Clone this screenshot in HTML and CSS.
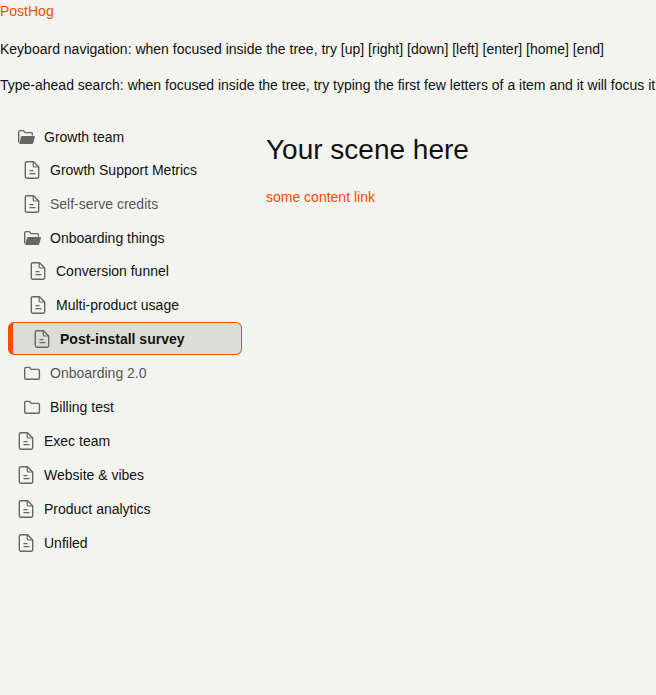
FILE: index.html
```html
<!DOCTYPE html>
<html lang="en">
<head>
    <meta charset="UTF-8">
    <meta name="viewport" content="width=device-width, initial-scale=1.0">
    <title>PostHog tree</title>
    <link rel="stylesheet" href="styles.css">
</head>
<body>
    <svg class="icon-defs" width="0" height="0">
        <symbol id="icon-file" viewBox="0 0 18 18">
            <path d="M2.3 2.2C2.3 1.4 2.9 0.8 3.7 0.8H10.6L15.7 5.9V15.8C15.7 16.6 15.1 17.2 14.3 17.2H3.7C2.9 17.2 2.3 16.6 2.3 15.8Z" fill="none" stroke="currentColor" stroke-width="1.4" stroke-linejoin="round"/>
            <path d="M10.2 1V4.8C10.2 5.5 10.7 6 11.4 6H15.5M6.5 9.6H10.5M6.5 12.6H12.5" fill="none" stroke="currentColor" stroke-width="1.2"/>
        </symbol>
        <symbol id="icon-folder" viewBox="0 0 18 18">
            <path d="M1.7 4.6C1.7 3.9 2.2 3.4 2.9 3.4H6.4L8.2 5.4H15.2C15.9 5.4 16.4 5.9 16.4 6.6V14C16.4 14.7 15.9 15.2 15.2 15.2H2.9C2.2 15.2 1.7 14.7 1.7 14Z" fill="none" stroke="currentColor" stroke-width="1.4" stroke-linejoin="round"/>
        </symbol>
        <symbol id="icon-folder-open" viewBox="0 0 18 18">
            <path d="M1.7 14.6V3.8C1.7 3.1 2.2 2.6 2.9 2.6H6.4L8.2 4.6H14.2C14.9 4.6 15.4 5.1 15.4 5.8V7.4" fill="none" stroke="currentColor" stroke-width="1.4" stroke-linejoin="round"/>
            <path d="M2.2 16L4 8.8C4.1 8.3 4.5 8 5 8H17C17.6 8 18 8.6 17.9 9.2L16.2 15C16 15.6 15.5 16 14.9 16Z" fill="currentColor"/>
        </symbol>
    </svg>

    <a class="link" href="#">PostHog</a>
    <p class="hint">Keyboard navigation: when focused inside the tree, try [up] [right] [down] [left] [enter] [home] [end]</p>
    <p class="hint">Type-ahead search: when focused inside the tree, try typing the first few letters of a item and it will focus it</p>

    <div class="layout">
        <ul class="tree">
            <li>
                <div class="row"><svg class="icon"><use href="#icon-folder-open"/></svg>Growth team</div>
                <ul class="group">
                    <li class="row level-1"><svg class="icon"><use href="#icon-file"/></svg>Growth Support Metrics</li>
                    <li class="row level-1 dim"><svg class="icon"><use href="#icon-file"/></svg>Self-serve credits</li>
                    <li>
                        <div class="row level-1"><svg class="icon"><use href="#icon-folder-open"/></svg>Onboarding things</div>
                        <ul class="group">
                            <li class="row level-2"><svg class="icon"><use href="#icon-file"/></svg>Conversion funnel</li>
                            <li class="row level-2"><svg class="icon"><use href="#icon-file"/></svg>Multi-product usage</li>
                            <li class="row level-2 active"><svg class="icon"><use href="#icon-file"/></svg>Post-install survey</li>
                        </ul>
                    </li>
                    <li class="row level-1 dim"><svg class="icon"><use href="#icon-folder"/></svg>Onboarding 2.0</li>
                    <li class="row level-1"><svg class="icon"><use href="#icon-folder"/></svg>Billing test</li>
                </ul>
            </li>
            <li class="row"><svg class="icon"><use href="#icon-file"/></svg>Exec team</li>
            <li class="row"><svg class="icon"><use href="#icon-file"/></svg>Website &amp; vibes</li>
            <li class="row"><svg class="icon"><use href="#icon-file"/></svg>Product analytics</li>
            <li class="row"><svg class="icon"><use href="#icon-file"/></svg>Unfiled</li>
        </ul>
        <main class="scene">
            <h1>Your scene here</h1>
            <a class="link" href="#">some content link</a>
        </main>
    </div>
</body>
</html>
```

FILE: styles.css
```css
body {
    font-family: "Liberation Sans", Arial, sans-serif;
    font-size: 14px;
    line-height: 21px;
    color: #111;
    background-color: #f3f4ef;
    margin: 0;
    padding-top: 1px;
}

.icon-defs {
    display: block;
    height: 0;
}

.link {
    color: #f54e00;
    text-decoration: none;
}

.hint {
    margin: 15px 0;
    white-space: nowrap;
}

.link + .hint {
    margin-top: 17px;
}

.layout {
    display: flex;
    margin-top: 25px;
}

.tree {
    list-style: none;
    width: 234px;
    margin: 0 8px;
    padding: 0;
    flex-shrink: 0;
}

.group {
    list-style: none;
    margin: -1px 0 0;
    padding: 0;
}

.row {
    display: flex;
    align-items: center;
    gap: 9px;
    height: 32px;
    margin-bottom: 2px;
    padding-left: 8px;
    box-sizing: border-box;
    border: 1px solid transparent;
    border-radius: 6px;
}

.level-1 {
    padding-left: 14px;
}

.level-2 {
    padding-left: 20px;
}

.dim {
    color: #555;
}

.active {
    padding: 1px 0 0 20px;
    height: 33px;
    margin-top: -1px;
    font-weight: bold;
    background-color: #dcded5;
    border-color: #f54e00;
    border-left-width: 5px;
}

.icon {
    width: 18px;
    height: 18px;
    color: #666;
    flex-shrink: 0;
}

.scene {
    padding-left: 16px;
}

.scene h1 {
    font-size: 28px;
    font-weight: normal;
    line-height: 34px;
    margin: 0 0 20px;
    padding-top: 12px;
}
```
